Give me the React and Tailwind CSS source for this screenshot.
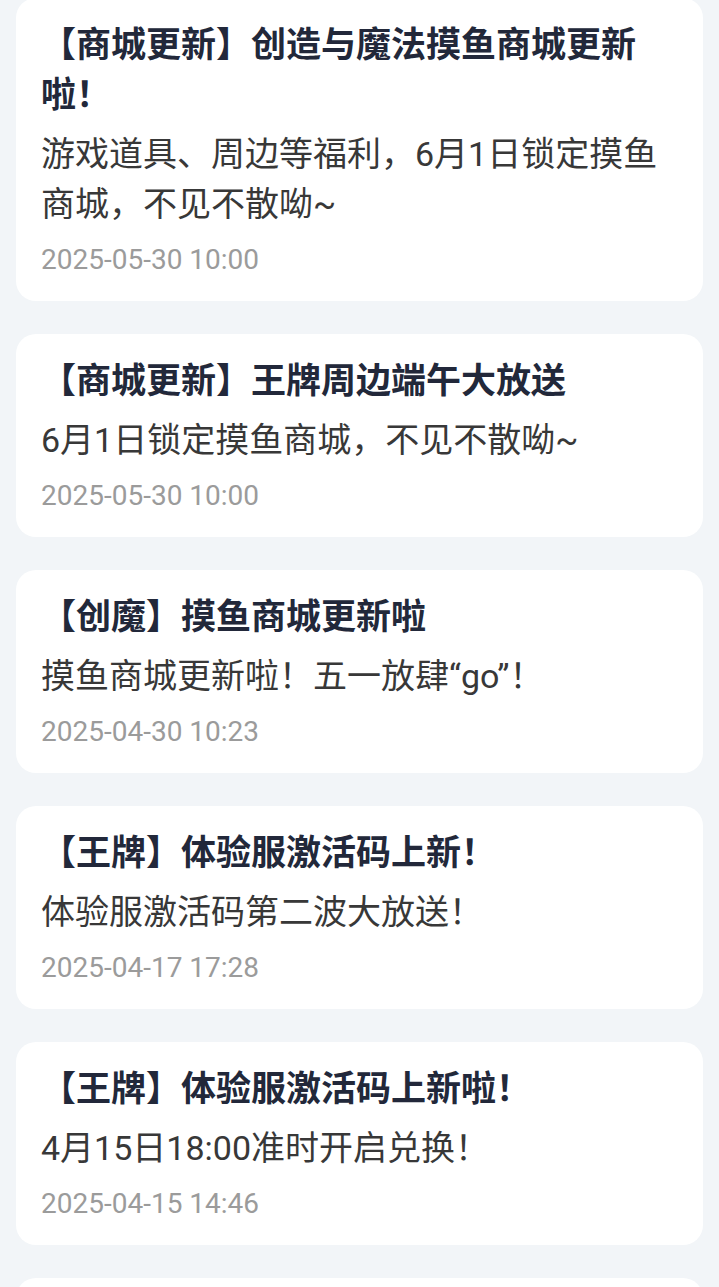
import React from 'react';

const notices = [
  {
    title: '【商城更新】创造与魔法摸鱼商城更新啦！',
    body: '游戏道具、周边等福利，6月1日锁定摸鱼商城，不见不散呦~',
    time: '2025-05-30 10:00',
  },
  {
    title: '【商城更新】王牌周边端午大放送',
    body: '6月1日锁定摸鱼商城，不见不散呦~',
    time: '2025-05-30 10:00',
  },
  {
    title: '【创魔】摸鱼商城更新啦',
    body: '摸鱼商城更新啦！五一放肆“go”！',
    time: '2025-04-30 10:23',
  },
  {
    title: '【王牌】体验服激活码上新！',
    body: '体验服激活码第二波大放送！',
    time: '2025-04-17 17:28',
  },
  {
    title: '【王牌】体验服激活码上新啦！',
    body: '4月15日18:00准时开启兑换！',
    time: '2025-04-15 14:46',
  },
  {
    title: '【商城更新】摸鱼商城四月上新',
    body: '多款游戏周边限时兑换，快来看看吧~',
    time: '2025-04-01 10:00',
  },
];

function NoticeCard({ notice }) {
  return (
    <div className="bg-white rounded-[20px] pt-[23px] pb-[21px] px-[25px]">
      <h3 className="text-[35px] leading-[50px] font-bold text-[#22283a]">{notice.title}</h3>
      <p className="mt-[8px] text-[34px] leading-[50px] text-[#383838]">{notice.body}</p>
      <p className="mt-[11px] text-[28px] leading-[40px] text-[#9b9b9b]">{notice.time}</p>
    </div>
  );
}

export default function App() {
  return (
    <div
      className="min-h-screen w-full bg-[#f2f5f8] px-4 overflow-hidden"
      style={{ fontFamily: 'Roboto, "Noto Sans CJK SC", sans-serif' }}
    >
      <div className="flex flex-col gap-[33px] -mt-[2px] pb-8">
        {notices.map((n, i) => (
          <NoticeCard key={i} notice={n} />
        ))}
      </div>
    </div>
  );
}
